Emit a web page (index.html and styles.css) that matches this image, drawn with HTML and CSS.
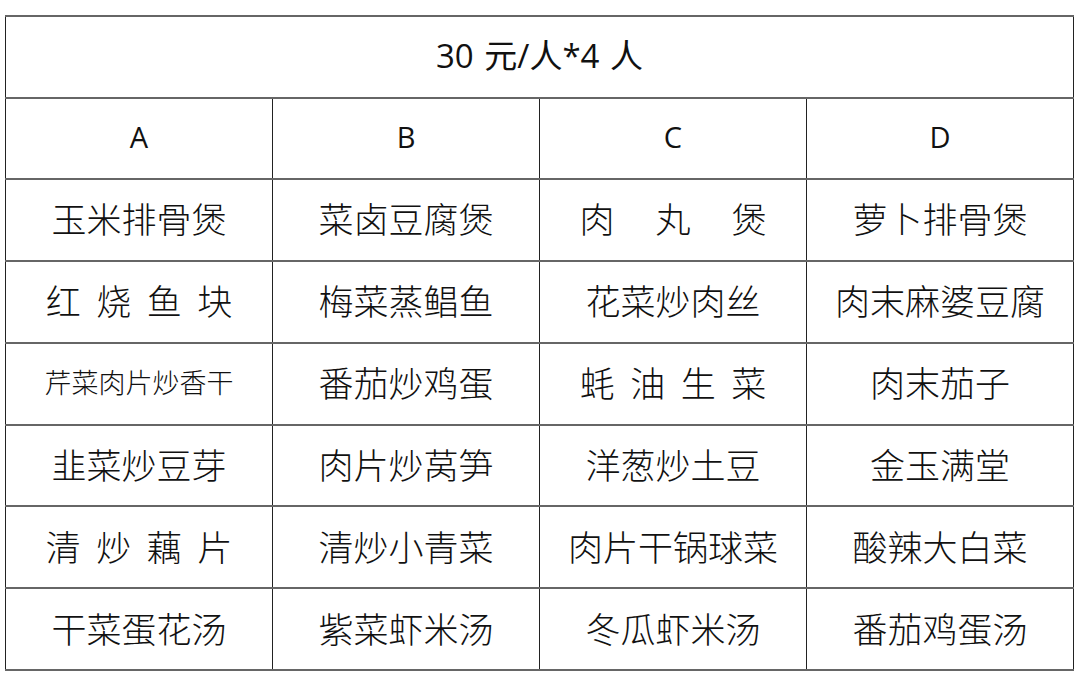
FILE: index.html
```html
<!DOCTYPE html>
<html lang="zh-CN">
<head>
<meta charset="utf-8">
<title>菜单</title>
<link rel="stylesheet" href="styles.css">
</head>
<body>
<table class="menu">
  <colgroup><col class="c"><col class="c"><col class="c"><col class="c"></colgroup>
  <tr class="title-row"><td colspan="4" class="title">30 元/人*4 人</td></tr>
  <tr class="head-row"><td class="head">A</td><td class="head">B</td><td class="head">C</td><td class="head">D</td></tr>
  <tr><td>玉米排骨煲</td><td>菜卤豆腐煲</td><td><span class="sp3">肉丸煲</span></td><td>萝卜排骨煲</td></tr>
  <tr><td><span class="sp4">红烧鱼块</span></td><td>梅菜蒸鲳鱼</td><td>花菜炒肉丝</td><td>肉末麻婆豆腐</td></tr>
  <tr><td class="small">芹菜肉片炒香干</td><td>番茄炒鸡蛋</td><td><span class="sp4">蚝油生菜</span></td><td>肉末茄子</td></tr>
  <tr><td>韭菜炒豆芽</td><td>肉片炒莴笋</td><td>洋葱炒土豆</td><td>金玉满堂</td></tr>
  <tr><td><span class="sp4">清炒藕片</span></td><td>清炒小青菜</td><td>肉片干锅球菜</td><td>酸辣大白菜</td></tr>
  <tr><td>干菜蛋花汤</td><td>紫菜虾米汤</td><td>冬瓜虾米汤</td><td>番茄鸡蛋汤</td></tr>
</table>
</body>
</html>
```
FILE: styles.css
```css
html, body {
  margin: 0;
  padding: 0;
  background: #ffffff;
}
body {
  padding: 15px 0 0 5px;
  font-family: "Noto Sans CJK SC", "Noto Sans", sans-serif;
  color: #111;
}
.menu {
  border-collapse: collapse;
  table-layout: fixed;
  width: 1069px;
}
.menu .c {
  width: 267px;
}
.menu td {
  border-left: 1px solid #222;
  border-right: 1px solid #222;
  border-top: 2px solid #666;
  border-bottom: 2px solid #666;
  text-align: center;
  vertical-align: middle;
  padding: 0 0 4px 0;
  height: 75.9px;
  font-size: 35px;
  font-weight: 300;
  line-height: 1;
}
.menu .title-row td {
  height: 77px;
}
.menu td.title,
.menu td.head {
  font-family: "Open Sans", "Liberation Sans", "Noto Sans CJK SC", sans-serif;
  font-size: 29px;
  font-weight: 400;
  color: #111;
  padding-bottom: 3px;
}
.menu td.title {
  font-size: 33px;
  word-spacing: 2px;
}
.menu td.small {
  font-size: 27px;
}
.sp4 {
  letter-spacing: 15.5px;
  margin-right: -15.5px;
}
.sp3 {
  letter-spacing: 41px;
  margin-right: -41px;
}
```
